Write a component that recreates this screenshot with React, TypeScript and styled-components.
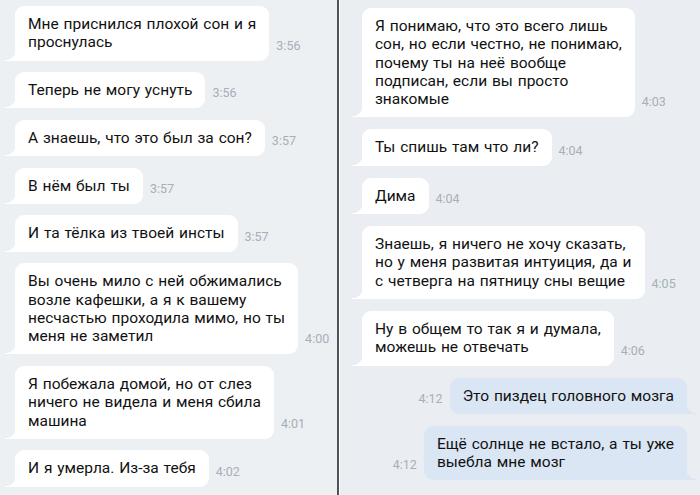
import React from "react";
import styled, { createGlobalStyle } from "styled-components";

const Global = createGlobalStyle`
  html, body { margin: 0; padding: 0; background: #ebeef2; }
  body { font-family: Roboto, "Noto Sans", sans-serif; }
`;

const Screen = styled.div`
  display: flex;
  width: 700px;
  height: 495px;
  overflow: hidden;
  background: #ebeef2;
`;

const Panel = styled.div<{ $side: "left" | "right" }>`
  display: flex;
  flex-direction: column;
  gap: ${(p) => (p.$side === "left" ? "11.5px" : "12px")};
  box-sizing: border-box;
  width: ${(p) => (p.$side === "left" ? "337px" : "auto")};
  flex: ${(p) => (p.$side === "left" ? "none" : "1")};
  padding: ${(p) => (p.$side === "left" ? "6px 0 0 15px" : "8px 13px 0 22px")};
  background: ${(p) => (p.$side === "left" ? "#edf0f3" : "#eaeef2")};
`;

const Divider = styled.div`
  width: 2px;
  flex: none;
  background: #505356;
  border-right: 1px solid #ffffff;
`;

const Row = styled.div<{ $out?: boolean }>`
  display: flex;
  align-items: flex-end;
  gap: 7px;
  flex-direction: ${(p) => (p.$out ? "row-reverse" : "row")};
`;

const Bubble = styled.div<{ $out?: boolean }>`
  position: relative;
  box-sizing: border-box;
  padding: 9px 13px 9px 13px;
  border-radius: ${(p) => (p.$out ? "9px 9px 0 9px" : "9px 9px 9px 0")};
  background: ${(p) => (p.$out ? "#dae6f4" : "#ffffff")};
  color: #111111;
  font-size: 15.5px;
  line-height: 18.3px;
  word-spacing: 1px;
  white-space: pre-line;

  &::after {
    content: "";
    position: absolute;
    bottom: 0;
    width: 11px;
    height: 12px;
    ${(p) =>
      p.$out
        ? `right: -10px; background: radial-gradient(circle at 100% 0, transparent 11px, #dae6f4 11.5px);`
        : `left: -10px; background: radial-gradient(circle at 0 0, transparent 11px, #ffffff 11.5px);`}
  }
`;

const Time = styled.span`
  font-size: 12.5px;
  line-height: 14px;
  color: #a7afb8;
  padding-bottom: 8px;
  flex: none;
`;

type Msg = { text: string; time: string; out?: boolean };

const left: Msg[] = [
  { text: "Мне приснился плохой сон и я\nпроснулась", time: "3:56" },
  { text: "Теперь не могу уснуть", time: "3:56" },
  { text: "А знаешь, что это был за сон?", time: "3:57" },
  { text: "В нём был ты", time: "3:57" },
  { text: "И та тёлка из твоей инсты", time: "3:57" },
  {
    text:
      "Вы очень мило с ней обжимались\nвозле кафешки, а я к вашему\nнесчастью проходила мимо, но ты\nменя не заметил",
    time: "4:00",
  },
  {
    text: "Я побежала домой, но от слез\nничего не видела и меня сбила\nмашина",
    time: "4:01",
  },
  { text: "И я умерла. Из-за тебя", time: "4:02" },
];

const right: Msg[] = [
  {
    text:
      "Я понимаю, что это всего лишь\nсон, но если честно, не понимаю,\nпочему ты на неё вообще\nподписан, если вы просто\nзнакомые",
    time: "4:03",
  },
  { text: "Ты спишь там что ли?", time: "4:04" },
  { text: "Дима", time: "4:04" },
  {
    text:
      "Знаешь, я ничего не хочу сказать,\nно у меня развитая интуиция, да и\nс четверга на пятницу сны вещие",
    time: "4:05",
  },
  { text: "Ну в общем то так я и думала,\nможешь не отвечать", time: "4:06" },
  { text: "Это пиздец головного мозга", time: "4:12", out: true },
  { text: "Ещё солнце не встало, а ты уже\nвыебла мне мозг", time: "4:12", out: true },
];

const Message = ({ m }: { m: Msg }) => (
  <Row $out={m.out}>
    <Bubble $out={m.out}>{m.text}</Bubble>
    <Time>{m.time}</Time>
  </Row>
);

export default function App() {
  return (
    <>
      <Global />
      <Screen>
        <Panel $side="left">
          {left.map((m, i) => (
            <Message key={i} m={m} />
          ))}
        </Panel>
        <Divider />
        <Panel $side="right">
          {right.map((m, i) => (
            <Message key={i} m={m} />
          ))}
        </Panel>
      </Screen>
    </>
  );
}
